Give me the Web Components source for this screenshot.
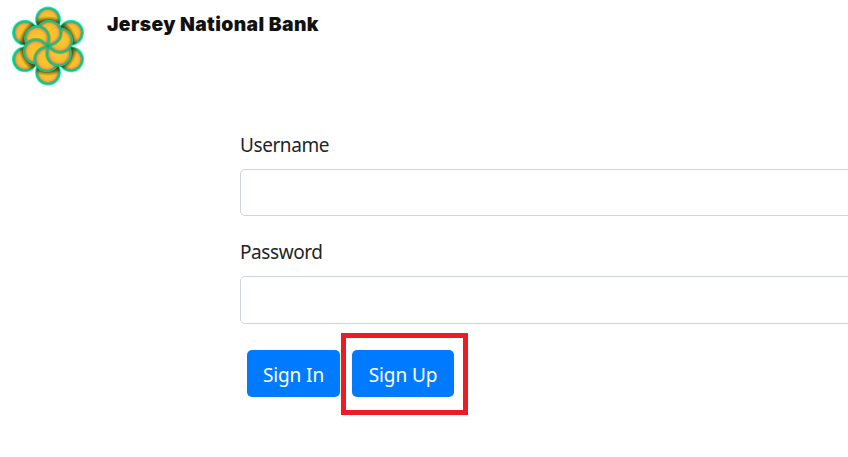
<!DOCTYPE html>
<html lang="en">
<head>
<meta charset="utf-8">
<title>Jersey National Bank</title>
<style>
html,body{margin:0;height:100%;overflow:hidden;background:#fff;font-family:"Noto Sans","Open Sans",sans-serif;color:#212529}
</style>
</head>
<body>
<bank-page></bank-page>
<script>
const define = (name, html) => customElements.define(name, class extends HTMLElement {
  constructor() {
    super();
    this.attachShadow({mode: 'open'}).innerHTML = html;
  }
});

const circle = ([x, y], r) => `<circle cx="${x.toFixed(2)}" cy="${y.toFixed(2)}" r="${r}"/>`;
const petal = (p, r) => `<g fill="#3c3a00" opacity=".3">${circle(p, r + .6)}</g><g fill="url(#petal)">${circle(p, r)}</g>`;
const ring = (dist, start) => Array.from({length: 6}, (_, i) => {
  const a = (start - i * 60) * Math.PI / 180;
  return [48 + dist * Math.sin(a), 46 - dist * Math.cos(a)];
});
const outer = ring(26.6, 0), inner = ring(13.3, 5);
define('bank-logo', `
<style>:host{display:block;width:96px;height:95px;flex:none}svg{display:block}</style>
<svg width="96" height="95" viewBox="0 0 96 95">
  <defs>
    <radialGradient id="petal">
      <stop offset="0" stop-color="#fbc926"/><stop offset=".6" stop-color="#f6bd30"/>
      <stop offset=".74" stop-color="#ee9f46"/><stop offset=".81" stop-color="#9c9c55"/>
      <stop offset=".88" stop-color="#1bbd7b"/><stop offset="1" stop-color="#12cc8c"/>
    </radialGradient>
    <radialGradient id="shade" gradientUnits="userSpaceOnUse" cx="48" cy="46" r="30">
      <stop offset=".84" stop-color="#3a3a00" stop-opacity=".75"/><stop offset="1" stop-color="#4a4200" stop-opacity="0"/>
    </radialGradient>
    <clipPath id="outerShape">${outer.map(p => circle(p, 12)).join('')}</clipPath>
    <clipPath id="right">${circle(inner[5], 13.6)}${circle(inner[4], 13)}</clipPath>
    <clipPath id="upperRight">${circle(inner[5], 13.6)}</clipPath>
    <filter id="halo" x="-20%" y="-20%" width="140%" height="140%"><feGaussianBlur stdDeviation=".6"/></filter>
  </defs>
  <g fill="#28f5cc" filter="url(#halo)">${outer.map(p => circle(p, 13)).join('')}</g>
  <g fill="url(#petal)">${outer.map(p => circle(p, 12.2)).join('')}</g>
  <circle cx="48" cy="46" r="30" fill="url(#shade)" clip-path="url(#outerShape)"/>
  ${inner.map(p => petal(p, 13)).join('')}
  <g clip-path="url(#right)">${petal(inner[0], 13)}</g>
  <g clip-path="url(#upperRight)">${petal(inner[1], 13)}</g>
</svg>`);

define('bank-header', `
<style>
:host{display:flex;height:95px;align-items:flex-start}
b{font:900 19.3px/24px Inter,sans-serif;color:#111;padding:12px 0 0 11px;letter-spacing:.38px;white-space:nowrap}
</style>
<bank-logo></bank-logo><b><slot></slot></b>`);

define('form-field', `
<style>
:host{display:block}
label{display:block;font-size:19px;line-height:30px;letter-spacing:-.42px}
input{display:block;box-sizing:border-box;width:100%;height:var(--field-height,47px);margin:9px 0 0;border:1px solid #ced4da;border-radius:5px;background:#fff;outline:0}
</style>
<label><slot></slot></label><input aria-label="field">`);

define('action-button', `
<style>
:host{display:block;width:var(--w)}
button{display:block;width:100%;height:47px;border:0;border-radius:5px;background:#007bff;color:#fff;font:19px/47px "Noto Sans",sans-serif;padding:2px 0 0;letter-spacing:-.1px;white-space:nowrap}
</style>
<button><slot></slot></button>`);

define('marked-area', `
<style>:host{display:block;box-sizing:border-box;width:127px;height:82px;border:5px solid #ed1c24;padding:12px 0 0 6px}</style>
<slot></slot>`);

define('bank-page', `
<style>
:host{display:block;width:848px;height:457px;overflow:hidden}
form{display:block;padding:35px 0 0 240px;width:640px}
.second{margin-top:21px;--field-height:48px}
.actions{display:flex;align-items:flex-start;margin:9px 0 0 7px;gap:1px}
.actions>action-button{margin-top:17px}
</style>
<bank-header>Jersey National Bank</bank-header>
<form>
  <form-field>Username</form-field>
  <form-field class="second">Password</form-field>
  <div class="actions">
    <action-button style="--w:93px">Sign In</action-button>
    <marked-area><action-button style="--w:102px">Sign Up</action-button></marked-area>
  </div>
</form>`);
</script>
</body>
</html>
